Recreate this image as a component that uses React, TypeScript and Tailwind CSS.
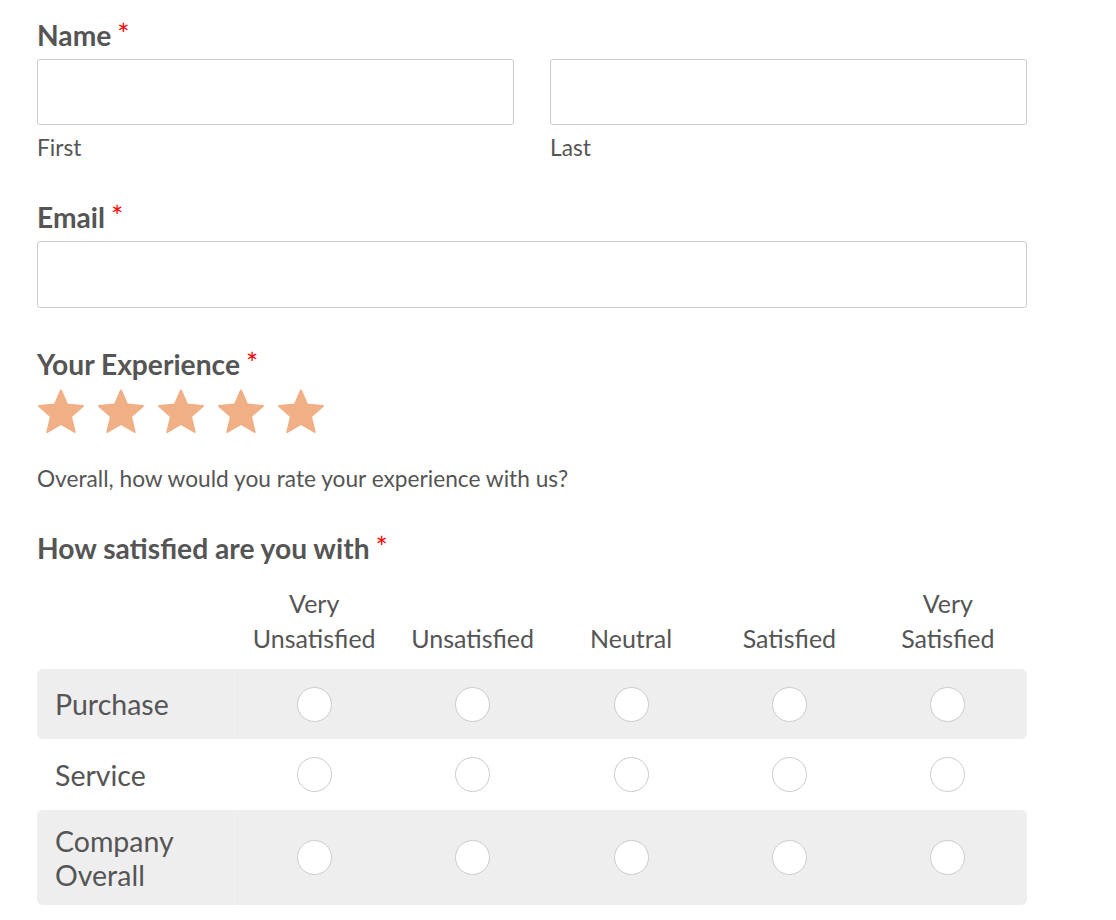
import React from 'react';

const columns = [
    { key: 'vu', lines: ['Very', 'Unsatisfied'] },
    { key: 'u', lines: ['Unsatisfied'] },
    { key: 'n', lines: ['Neutral'] },
    { key: 's', lines: ['Satisfied'] },
    { key: 'vs', lines: ['Very', 'Satisfied'] },
];

const rows = [
    { key: 'purchase', label: ['Purchase'], shaded: true, height: 'h-[70px]' },
    { key: 'service', label: ['Service'], shaded: false, height: 'h-[71px]' },
    { key: 'company', label: ['Company', 'Overall'], shaded: true, height: 'h-[95px]' },
];

function Label({ children }: { children: React.ReactNode }) {
    return (
        <div className="text-[28.2px] leading-[36px] font-bold text-[#555555]">
            {children}
            <span className="ml-[6px] mt-[2px] inline-block align-top text-[29px] leading-[30px] font-normal text-[#ff0000]">*</span>
        </div>
    );
}

function Star() {
    return (
        <svg width="48" height="46" viewBox="0 0 48 46" className="block">
            <path
                d="M24 1.5 L30.2 15.6 L46 16.9 L34 27.4 L37.7 43 L24 34.8 L10.3 43 L14 27.4 L2 16.9 L17.8 15.6 Z"
                fill="#f0af84"
                stroke="#f0af84"
                strokeWidth="2"
                strokeLinejoin="round"
            />
        </svg>
    );
}

function Radio() {
    return <div className="w-[35px] h-[35px] rounded-full bg-white border border-[#cccccc]" />;
}

export default function App() {
    return (
        <div className="min-h-screen bg-white" style={{ fontFamily: 'Lato, "Open Sans", sans-serif' }}>
            <div className="ml-[37px] w-[990px] pt-[17px] text-[#555555]">
                {/* Name */}
                <Label>Name</Label>
                <div className="mt-[6px] grid grid-cols-2 gap-[36px]">
                    <div>
                        <div className="h-[66px] rounded-[3px] border border-[#cccccc] bg-white" />
                        <div className="mt-[8px] text-[22.7px] leading-[30px]">First</div>
                    </div>
                    <div>
                        <div className="h-[66px] rounded-[3px] border border-[#cccccc] bg-white" />
                        <div className="mt-[8px] text-[22.7px] leading-[30px]">Last</div>
                    </div>
                </div>

                {/* Email */}
                <div className="mt-[36px]">
                    <Label>Email</Label>
                </div>
                <div className="mt-[6px] h-[67px] rounded-[3px] border border-[#cccccc] bg-white" />

                {/* Experience */}
                <div className="mt-[38px]">
                    <Label>Your Experience</Label>
                </div>
                <div className="mt-[7px] flex gap-[12px]">
                    {[0, 1, 2, 3, 4].map(i => (
                        <Star key={i} />
                    ))}
                </div>
                <div className="mt-[29px] text-[22.7px] leading-[30px]">
                    Overall, how would you rate your experience with us?
                </div>

                {/* Likert */}
                <div className="mt-[36px]">
                    <Label>How satisfied are you with</Label>
                </div>
                <div className="mt-[20px] flex items-end">
                    <div className="w-[198px]" />
                    {columns.map(c => (
                        <div key={c.key} className="flex-1 text-center text-[25px] leading-[35px]">
                            {c.lines.map(l => (
                                <div key={l}>{l}</div>
                            ))}
                        </div>
                    ))}
                </div>
                <div className="mt-[13px]">
                    {rows.map(r => (
                        <div
                            key={r.key}
                            className={`flex items-stretch rounded-[6px] ${r.height} ${r.shaded ? 'bg-[#eeeeee]' : 'bg-white'}`}
                        >
                            <div
                                className={`w-[198px] pl-[18px] flex flex-col justify-center text-[28.5px] leading-[34px] ${r.shaded ? 'border-r border-[#f2f2f2]' : ''}`}
                            >
                                {r.label.map(l => (
                                    <div key={l}>{l}</div>
                                ))}
                            </div>
                            {columns.map(c => (
                                <div key={c.key} className="flex-1 flex items-center justify-center">
                                    <Radio />
                                </div>
                            ))}
                        </div>
                    ))}
                </div>
            </div>
        </div>
    );
}
